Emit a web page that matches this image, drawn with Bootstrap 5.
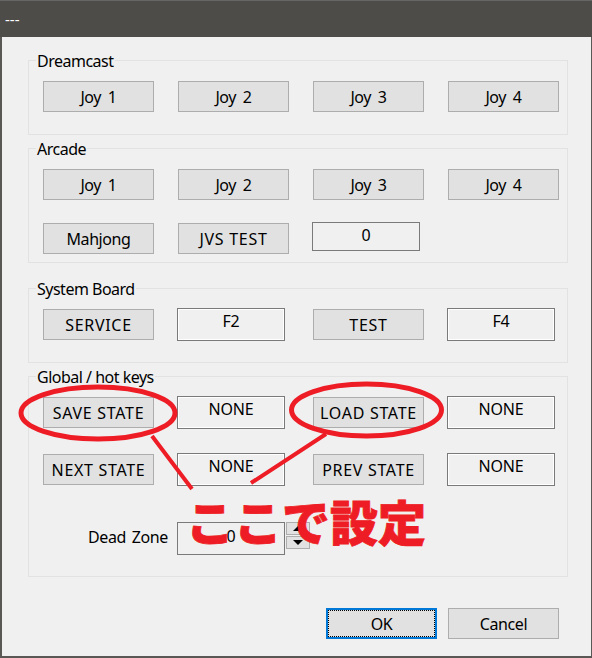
<!DOCTYPE html>
<html lang="ja"><head><meta charset="utf-8">
<link href="https://cdn.jsdelivr.net/npm/bootstrap@5.3.0/dist/css/bootstrap.min.css" rel="stylesheet">
<style>
html,body{margin:0;height:658px;overflow:hidden;background:#f0f0f0}
body{font-family:"Liberation Sans",sans-serif}
.dlg{position:relative;width:592px;height:658px;background:#f0f0f0;border:solid #5a5855;border-width:0 1px 2px 2px;font-family:"Noto Sans","Open Sans",sans-serif;font-size:16px;color:#000}
.ttl{height:37px;margin:0 -1px 0 -2px;background:#4e4c49;color:#fff;font-size:15px;line-height:37px;padding-left:5px;border-top:1px solid #666}
.grp{margin:0 23px 0 26px;border:1.5px solid #e2e2e2;padding:0 14px;min-width:0}
.grp legend{float:none;width:auto;font-size:16px;letter-spacing:-.5px;line-height:22px;margin:0 0 0 -7px;padding:2px 1px 0;color:#000}
.g1{margin-top:11px;height:87px}
.g2{margin-top:1px;height:127px}
.g3{margin-top:13px;height:87px}
.g4{margin-top:1px;height:213px}
.cells{display:grid;grid-template-columns:repeat(4,111px);column-gap:24px;padding-top:9px}
.cells.gapa{row-gap:23px}
.cells.gapb{row-gap:26px}
.wbtn{width:111px;height:31px;padding:2px 0 0;border-radius:0;background:#e1e1e1;border:1.5px solid #adadad;color:#000;font-size:16px;letter-spacing:-.4px;word-spacing:3px;line-height:25px;text-align:center;--bs-btn-hover-bg:#e1e1e1}
.capsl{letter-spacing:.7px;word-spacing:0}
.wbox{width:108px;margin:-1px 0 -1px -1px;height:33px;background:#f0f0f0;border:1px solid #7a7a7a;box-shadow:inset 0 0 0 1px #fff;text-align:center;font-size:16px;line-height:25px;letter-spacing:-.2px}
.boxlow{height:29px;line-height:24px;box-shadow:none}
.dzrow{display:flex;align-items:center;margin-top:37px;height:33px}
.dzlab{width:89px;margin-left:45px;padding-bottom:4px;font-size:16px;letter-spacing:-.4px;word-spacing:2px;white-space:nowrap}
.dzbox{width:108px;height:33px;border:1px solid #7a7a7a;text-align:center;line-height:26px;font-size:16px}
.spin{display:flex;flex-direction:column;gap:1px;margin-left:1px;width:24px;align-self:flex-start}
.spin span{height:13px;background:#e1e1e1;border:1px solid #adadad;display:flex;align-items:center;justify-content:center}
.tri{width:0;height:0;border-left:5px solid transparent;border-right:5px solid transparent}
.tup{border-bottom:5px solid #000}.tdn{border-top:5px solid #000}
.foot{display:flex;justify-content:flex-end;gap:11px;margin:31px 32px 0 0}
.ok{border:2px solid #0078d7;position:relative}
.ok::after{content:"";position:absolute;inset:0;border:1px dotted #000}
.ann{position:absolute;left:0;top:0;width:592px;height:658px;pointer-events:none}
.jp{position:absolute;left:184px;top:489px;font-family:"Noto Sans CJK JP",sans-serif;font-weight:900;font-size:48px;line-height:62px;color:#ee1c25;-webkit-text-stroke:.8px #ee1c25;white-space:nowrap}
</style></head><body>
<div class="dlg">
<div class="ttl">---</div>
<fieldset class="grp g1"><legend>Dreamcast</legend>
<div class="cells"><button class="btn wbtn">Joy 1</button><button class="btn wbtn">Joy 2</button><button class="btn wbtn">Joy 3</button><button class="btn wbtn">Joy 4</button></div></fieldset>
<fieldset class="grp g2"><legend>Arcade</legend>
<div class="cells gapa"><button class="btn wbtn">Joy 1</button><button class="btn wbtn">Joy 2</button><button class="btn wbtn">Joy 3</button><button class="btn wbtn">Joy 4</button>
<button class="btn wbtn">Mahjong</button><button class="btn wbtn capsl">JVS TEST</button><div class="wbox boxlow">0</div></div></fieldset>
<fieldset class="grp g3"><legend>System Board</legend>
<div class="cells"><button class="btn wbtn capsl">SERVICE</button><div class="wbox">F2</div><button class="btn wbtn capsl">TEST</button><div class="wbox">F4</div></div></fieldset>
<fieldset class="grp g4"><legend>Global / hot keys</legend>
<div class="cells gapb"><button class="btn wbtn capsl">SAVE STATE</button><div class="wbox">NONE</div><button class="btn wbtn capsl">LOAD STATE</button><div class="wbox">NONE</div>
<button class="btn wbtn capsl">NEXT STATE</button><div class="wbox">NONE</div><button class="btn wbtn capsl">PREV STATE</button><div class="wbox">NONE</div></div>
<div class="dzrow"><div class="dzlab">Dead Zone</div><div class="dzbox">0</div><div class="spin"><span><i class="tri tup"></i></span><span><i class="tri tdn"></i></span></div></div>
</fieldset>
<div class="foot"><button class="btn wbtn ok">OK</button><button class="btn wbtn">Cancel</button></div>
<svg class="ann" viewBox="0 0 592 658" fill="none" stroke="#ee1c25" stroke-width="5"><ellipse cx="96" cy="413" rx="77" ry="26"/><ellipse cx="364.5" cy="410" rx="75" ry="26"/><path d="M150 436 190 489M324 434 249 483" stroke-width="4"/></svg>
<div class="jp">ここで設定</div>
</div>
</body></html>
